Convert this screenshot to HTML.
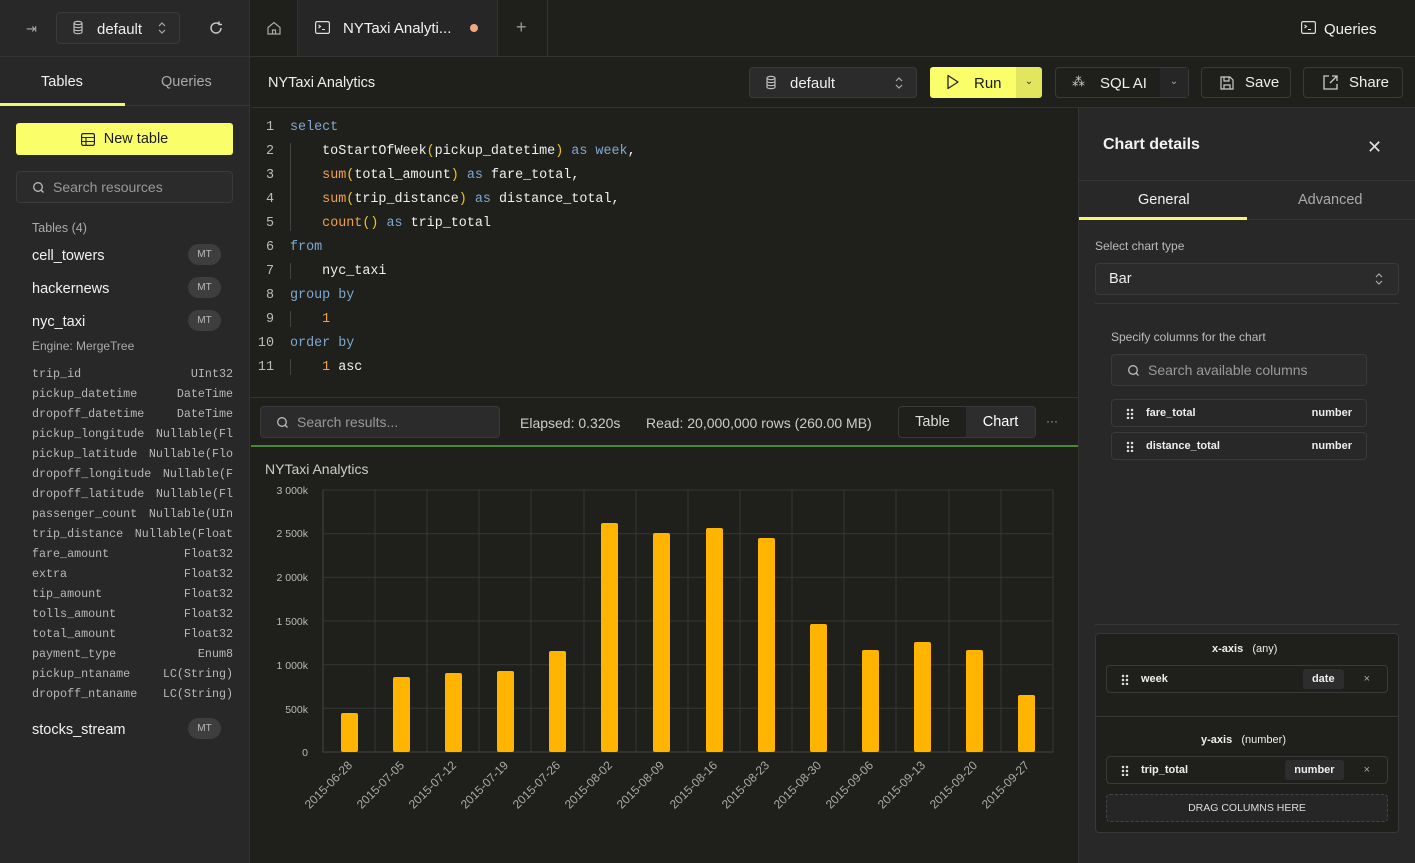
<!DOCTYPE html>
<html><head><meta charset="utf-8"><style>
*{box-sizing:border-box;margin:0;padding:0}
body{width:1415px;height:863px;overflow:hidden;background:#1f1f1b;font-family:"Liberation Sans",sans-serif;color:#e6e6e6;position:relative;font-size:14px}
.a{position:absolute}
.mono{font-family:"Liberation Mono",monospace}
.btn{position:absolute;border:1px solid #3a3a3a;border-radius:4px;display:flex;align-items:center}
svg{display:block}
.row{position:absolute;left:32px;width:201px;display:flex;justify-content:space-between;gap:5px;font-family:"Liberation Mono",monospace;font-size:11.7px;color:#b8b8b8;white-space:nowrap;overflow:hidden}
.row span:last-child{overflow:hidden;text-align:right}
.tb{position:absolute;left:32px;font-size:14.5px;color:#f2f2f2}
.mt{position:absolute;left:188px;width:33px;height:21px;border-radius:11px;background:#3e3e3e;color:#bbb;font-size:10px;display:flex;align-items:center;justify-content:center}
.ln{position:absolute;left:258px;width:16px;text-align:right;color:#bbb}
.code{position:absolute;left:290px;white-space:pre;color:#f0f0f0}
.k{color:#7fa8d0}.f{color:#f0a050}.p{color:#f5c518}.n{color:#f0a050}
.col{position:absolute;left:1111px;width:256px;height:28px;border:1px solid #3a3a3a;border-radius:4px;font-size:11px;font-weight:bold;display:flex;align-items:center;color:#eee}
.dots{width:8px;height:11px;margin:0 12px 0 14px;background-image:radial-gradient(circle,#ddd 1.2px,transparent 1.4px);background-size:4px 4px}
</style></head><body>

<div class="a" style="left:0;top:0;width:250px;height:57px;background:#282828;border-right:1px solid #333;border-bottom:1px solid #333"></div>
<div class="a" style="left:26px;top:21px;color:#aaa;font-size:13px">⇥</div>
<div class="btn" style="left:56px;top:12px;width:124px;height:32px;background:#2b2b2b">
  <svg width="40" height="30" viewBox="0 0 40 30"><g fill="none" stroke="#bbb" stroke-width="1.2"><ellipse cx="21" cy="10" rx="4" ry="1.6"/><path d="M17 10v9c0 1 1.8 1.6 4 1.6s4-.6 4-1.6v-9M17 13c0 1 1.8 1.6 4 1.6s4-.6 4-1.6M17 16c0 1 1.8 1.6 4 1.6s4-.6 4-1.6"/></g></svg>
  <span style="font-size:15px;color:#eee;margin-top:2px">default</span>
  <svg width="10" height="14" viewBox="0 0 10 14" style="margin-left:auto;margin-right:12px"><path d="M2 5l3-3 3 3M2 9l3 3 3-3" fill="none" stroke="#aaa" stroke-width="1.2"/></svg>
</div>
<svg class="a" style="left:208px;top:20px" width="16" height="16" viewBox="0 0 16 16"><path d="M13 8a5 5 0 1 1-2-4M11 1.5v3h3" fill="none" stroke="#ccc" stroke-width="1.4"/></svg>

<div class="a" style="left:250px;top:0;width:1165px;height:57px;border-bottom:1px solid #333;background:#1f1f1b"></div>
<div class="a" style="left:250px;top:0;width:48px;height:56px;border-right:1px solid #333"></div>
<svg class="a" style="left:266px;top:20px" width="16" height="16" viewBox="0 0 16 16"><path d="M2 7.5 8 2.5l6 5V14H2zM6.5 14v-4h3v4" fill="none" stroke="#aaa" stroke-width="1.2"/></svg>
<div class="a" style="left:298px;top:0;width:200px;height:56px;background:#262626;border-right:1px solid #333"></div>
<svg class="a" style="left:315px;top:21px" width="15" height="13" viewBox="0 0 15 13"><rect x="0.6" y="0.6" width="13.8" height="11.8" rx="1.5" fill="none" stroke="#ddd" stroke-width="1.2"/><path d="M3.5 4l2 1.5-2 1.5M7 8.5h3" fill="none" stroke="#ddd" stroke-width="1.1"/></svg>
<div class="a" style="left:343px;top:20px;font-size:15px;color:#f2f2f2">NYTaxi Analyti...</div>
<div class="a" style="left:470px;top:24px;width:8px;height:8px;border-radius:50%;background:#f4a582"></div>
<div class="a" style="left:498px;top:0;width:50px;height:56px;border-right:1px solid #333"></div>
<div class="a" style="left:516px;top:17px;color:#999;font-size:18px">+</div>
<svg class="a" style="left:1301px;top:21px" width="15" height="13" viewBox="0 0 15 13"><rect x="0.6" y="0.6" width="13.8" height="11.8" rx="1.5" fill="none" stroke="#ddd" stroke-width="1.2"/><path d="M3.5 4l2 1.5-2 1.5M7 8.5h3" fill="none" stroke="#ddd" stroke-width="1.1"/></svg>
<div class="a" style="left:1324px;top:21px;font-size:15px;color:#f2f2f2">Queries</div>

<div class="a" style="left:0;top:57px;width:250px;height:806px;background:#282828;border-right:1px solid #333"></div>
<div class="a" style="left:0;top:57px;width:250px;height:49px;border-bottom:1px solid #383838"></div>
<div class="a" style="left:41px;top:74px;font-size:14.5px;color:#f2f2f2">Tables</div>
<div class="a" style="left:161px;top:74px;font-size:14.5px;color:#aaa">Queries</div>
<div class="a" style="left:0;top:103px;width:125px;height:3px;background:#f5f76a"></div>
<div class="a" style="left:16px;top:123px;width:217px;height:32px;background:#faff69;border-radius:3px;display:flex;align-items:center;justify-content:center;color:#1a1a1a;font-size:14.5px">
<svg width="14" height="13" viewBox="0 0 14 13" style="margin-right:9px"><rect x="0.6" y="0.6" width="12.8" height="11.8" rx="1.5" fill="none" stroke="#222" stroke-width="1.2"/><path d="M0.6 4.5h12.8M0.6 8.5h12.8M5 4.5v8" stroke="#222" stroke-width="1.1"/></svg>New table</div>
<div class="btn" style="left:16px;top:171px;width:217px;height:32px;background:#2b2b2b">
<svg width="40" height="30" viewBox="0 0 40 30"><circle cx="21" cy="15" r="4.3" fill="none" stroke="#bbb" stroke-width="1.3"/><path d="M24 18l2.5 2.5" stroke="#bbb" stroke-width="1.3"/></svg>
<span style="color:#999;font-size:14px;margin-left:-4px">Search resources</span></div>
<div class="a" style="left:32px;top:221px;font-size:12.5px;color:#aaa">Tables (4)</div>
<div class="tb" style="top:248px">cell_towers</div><div class="mt" style="top:244px">MT</div>
<div class="tb" style="top:281px">hackernews</div><div class="mt" style="top:277px">MT</div>
<div class="tb" style="top:314px">nyc_taxi</div><div class="mt" style="top:310px">MT</div>
<div class="a" style="left:32px;top:339px;font-size:12px;color:#aaa">Engine: MergeTree</div>
<div class="row" style="top:367px"><span>trip_id</span><span>UInt32</span></div>
<div class="row" style="top:387px"><span>pickup_datetime</span><span>DateTime</span></div>
<div class="row" style="top:407px"><span>dropoff_datetime</span><span>DateTime</span></div>
<div class="row" style="top:427px"><span>pickup_longitude</span><span>Nullable(Fl</span></div>
<div class="row" style="top:447px"><span>pickup_latitude</span><span>Nullable(Flo</span></div>
<div class="row" style="top:467px"><span>dropoff_longitude</span><span>Nullable(F</span></div>
<div class="row" style="top:487px"><span>dropoff_latitude</span><span>Nullable(Fl</span></div>
<div class="row" style="top:507px"><span>passenger_count</span><span>Nullable(UIn</span></div>
<div class="row" style="top:527px"><span>trip_distance</span><span>Nullable(Float</span></div>
<div class="row" style="top:547px"><span>fare_amount</span><span>Float32</span></div>
<div class="row" style="top:567px"><span>extra</span><span>Float32</span></div>
<div class="row" style="top:587px"><span>tip_amount</span><span>Float32</span></div>
<div class="row" style="top:607px"><span>tolls_amount</span><span>Float32</span></div>
<div class="row" style="top:627px"><span>total_amount</span><span>Float32</span></div>
<div class="row" style="top:647px"><span>payment_type</span><span>Enum8</span></div>
<div class="row" style="top:667px"><span>pickup_ntaname</span><span>LC(String)</span></div>
<div class="row" style="top:687px"><span>dropoff_ntaname</span><span>LC(String)</span></div>
<div class="tb" style="top:722px">stocks_stream</div><div class="mt" style="top:718px">MT</div>

<div class="a" style="left:251px;top:57px;width:1164px;height:51px;border-bottom:1px solid #333"></div>
<div class="a" style="left:268px;top:75px;font-size:14.5px;color:#eee">NYTaxi Analytics</div>
<div class="btn" style="left:749px;top:67px;width:168px;height:31px;background:#2b2b2b">
<svg width="40" height="30" viewBox="0 0 40 30"><g fill="none" stroke="#bbb" stroke-width="1.2"><ellipse cx="21" cy="10" rx="4" ry="1.6"/><path d="M17 10v9c0 1 1.8 1.6 4 1.6s4-.6 4-1.6v-9M17 13c0 1 1.8 1.6 4 1.6s4-.6 4-1.6M17 16c0 1 1.8 1.6 4 1.6s4-.6 4-1.6"/></g></svg>
<span style="font-size:15px;color:#eee;margin-top:2px">default</span><svg width="10" height="14" viewBox="0 0 10 14" style="margin-left:auto;margin-right:12px"><path d="M2 5l3-3 3 3M2 9l3 3 3-3" fill="none" stroke="#aaa" stroke-width="1.2"/></svg></div>
<div class="a" style="left:930px;top:67px;width:87px;height:31px;background:#faff69;border-radius:3px 0 0 3px"></div>
<div class="a" style="left:1016px;top:67px;width:26px;height:31px;background:#e2e55e;border-radius:0 3px 3px 0;color:#333;font-size:10px;text-align:center;line-height:29px">⌄</div>
<svg class="a" style="left:946px;top:74px" width="14" height="16" viewBox="0 0 14 16"><path d="M2 1.5v13l10-6.5z" fill="none" stroke="#222" stroke-width="1.3" stroke-linejoin="round"/></svg>
<div class="a" style="left:974px;top:75px;font-size:15px;color:#1a1a1a">Run</div>
<div class="btn" style="left:1055px;top:67px;width:134px;height:31px"></div>
<div class="a" style="left:1160px;top:68px;width:28px;height:29px;background:#262626;color:#aaa;font-size:10px;text-align:center;line-height:27px">⌄</div>
<div class="a" style="left:1072px;top:74px;color:#ccc;font-size:13px">⁂</div>
<div class="a" style="left:1100px;top:75px;font-size:15px;color:#eee">SQL AI</div>
<div class="btn" style="left:1201px;top:67px;width:90px;height:31px"><svg width="16" height="16" viewBox="0 0 16 16" style="margin:0 10px 0 17px"><path d="M2 2h9l3 3v9H2zM5 2v4h5V2M5 14v-4h6v4" fill="none" stroke="#ccc" stroke-width="1.2"/></svg><span style="font-size:15px;color:#eee">Save</span></div>
<div class="btn" style="left:1303px;top:67px;width:100px;height:31px"><svg width="17" height="17" viewBox="0 0 17 17" style="margin:0 10px 0 18px"><path d="M7 2H2v13h13v-5M10 2h5v5M15 2 8 9" fill="none" stroke="#ccc" stroke-width="1.3"/></svg><span style="font-size:15px;color:#eee">Share</span></div>

<div class="mono" style="font-size:13.4px">
<div class="a" style="left:290px;top:143px;width:1px;height:88px;background:#444"></div>
<div class="a" style="left:290px;top:263px;width:1px;height:16px;background:#444"></div>
<div class="a" style="left:290px;top:311px;width:1px;height:16px;background:#444"></div>
<div class="a" style="left:290px;top:359px;width:1px;height:16px;background:#444"></div>
<div class="ln" style="top:120px">1</div><div class="code" style="top:120px"><span class="k">select</span></div>
<div class="ln" style="top:144px">2</div><div class="code" style="top:144px">    toStartOfWeek<span class="p">(</span>pickup_datetime<span class="p">)</span> <span class="k">as</span> <span class="k">week</span>,</div>
<div class="ln" style="top:168px">3</div><div class="code" style="top:168px">    <span class="f">sum</span><span class="p">(</span>total_amount<span class="p">)</span> <span class="k">as</span> fare_total,</div>
<div class="ln" style="top:192px">4</div><div class="code" style="top:192px">    <span class="f">sum</span><span class="p">(</span>trip_distance<span class="p">)</span> <span class="k">as</span> distance_total,</div>
<div class="ln" style="top:216px">5</div><div class="code" style="top:216px">    <span class="f">count</span><span class="p">()</span> <span class="k">as</span> trip_total</div>
<div class="ln" style="top:240px">6</div><div class="code" style="top:240px"><span class="k">from</span></div>
<div class="ln" style="top:264px">7</div><div class="code" style="top:264px">    nyc_taxi</div>
<div class="ln" style="top:288px">8</div><div class="code" style="top:288px"><span class="k">group by</span></div>
<div class="ln" style="top:312px">9</div><div class="code" style="top:312px">    <span class="n">1</span></div>
<div class="ln" style="top:336px;left:256px;width:18px">10</div><div class="code" style="top:336px"><span class="k">order by</span></div>
<div class="ln" style="top:360px;left:256px;width:18px">11</div><div class="code" style="top:360px">    <span class="n">1</span> asc</div>
</div>

<div class="a" style="left:251px;top:397px;width:828px;height:1px;background:#333"></div>
<div class="btn" style="left:260px;top:406px;width:240px;height:32px;background:#2b2b2b"><svg width="36" height="30" viewBox="0 0 36 30"><circle cx="21" cy="15" r="4.3" fill="none" stroke="#bbb" stroke-width="1.3"/><path d="M24 18l2.5 2.5" stroke="#bbb" stroke-width="1.3"/></svg><span style="color:#999;font-size:14px">Search results...</span></div>
<div class="a" style="left:520px;top:415px;font-size:14px;color:#ccc">Elapsed: 0.320s</div>
<div class="a" style="left:646px;top:415px;font-size:14px;color:#ccc">Read: 20,000,000 rows (260.00 MB)</div>
<div class="btn" style="left:898px;top:406px;width:138px;height:32px;overflow:hidden"><span style="width:68px;text-align:center;font-size:14.5px;color:#ddd">Table</span><span style="width:70px;height:100%;background:#2d2d2d;text-align:center;line-height:30px;font-size:14.5px;color:#fff">Chart</span></div>
<div class="a" style="left:1046px;top:414px;color:#aaa;font-size:12px">···</div>
<div class="a" style="left:251px;top:445px;width:828px;height:2px;background:#4b8a2b"></div>

<div class="a" style="left:265px;top:461px;font-size:14px;color:#ccc">NYTaxi Analytics</div>
<svg class="a" style="left:251px;top:470px" width="828" height="393" viewBox="251 470 828 393" font-family="Liberation Sans" font-size="10.5" fill="#bbb">
<g stroke="#363636" stroke-width="1">
<path d="M323 490H1053M323 533.7H1053M323 577.3H1053M323 621H1053M323 664.7H1053M323 708.3H1053"/>
<path d="M375 490V752M427 490V752M479 490V752M531 490V752M584 490V752M636 490V752M688 490V752M740 490V752M792 490V752M844 490V752M896 490V752M949 490V752M1001 490V752M1053 490V752"/>
</g>
<path d="M323 490V752H1053" stroke="#444" fill="none"/>
<g text-anchor="end"><text x="308" y="494">3 000k</text><text x="308" y="537">2 500k</text><text x="308" y="581">2 000k</text><text x="308" y="625">1 500k</text><text x="308" y="669">1 000k</text><text x="308" y="713">500k</text><text x="308" y="756">0</text></g>
<g fill="#ffb400">
<rect x="341" y="713" width="17" height="39" rx="2"/><rect x="393" y="677" width="17" height="75" rx="2"/><rect x="445" y="673" width="17" height="79" rx="2"/><rect x="497" y="671" width="17" height="81" rx="2"/><rect x="549" y="651" width="17" height="101" rx="2"/><rect x="601" y="523" width="17" height="229" rx="2"/><rect x="653" y="533" width="17" height="219" rx="2"/><rect x="706" y="528" width="17" height="224" rx="2"/><rect x="758" y="538" width="17" height="214" rx="2"/><rect x="810" y="624" width="17" height="128" rx="2"/><rect x="862" y="650" width="17" height="102" rx="2"/><rect x="914" y="642" width="17" height="110" rx="2"/><rect x="966" y="650" width="17" height="102" rx="2"/><rect x="1018" y="695" width="17" height="57" rx="2"/>
</g>
<g text-anchor="end" font-size="12" fill="#aaa">
<text transform="translate(353,766) rotate(-45)">2015-06-28</text><text transform="translate(405,766) rotate(-45)">2015-07-05</text><text transform="translate(457,766) rotate(-45)">2015-07-12</text><text transform="translate(509,766) rotate(-45)">2015-07-19</text><text transform="translate(561,766) rotate(-45)">2015-07-26</text><text transform="translate(613,766) rotate(-45)">2015-08-02</text><text transform="translate(665,766) rotate(-45)">2015-08-09</text><text transform="translate(718,766) rotate(-45)">2015-08-16</text><text transform="translate(770,766) rotate(-45)">2015-08-23</text><text transform="translate(822,766) rotate(-45)">2015-08-30</text><text transform="translate(874,766) rotate(-45)">2015-09-06</text><text transform="translate(926,766) rotate(-45)">2015-09-13</text><text transform="translate(978,766) rotate(-45)">2015-09-20</text><text transform="translate(1030,766) rotate(-45)">2015-09-27</text>
</g>
</svg>

<div class="a" style="left:1078px;top:108px;width:337px;height:755px;background:#282828;border-left:1px solid #333"></div>
<div class="a" style="left:1103px;top:136px;font-size:16px;font-weight:bold;color:#f2f2f2">Chart details</div>
<div class="a" style="left:1367px;top:137px;font-size:18px;color:#ddd">✕</div>
<div class="a" style="left:1079px;top:180px;width:336px;height:1px;background:#383838"></div>
<div class="a" style="left:1079px;top:219px;width:336px;height:1px;background:#383838"></div>
<div class="a" style="left:1138px;top:192px;font-size:14.5px;color:#f2f2f2">General</div>
<div class="a" style="left:1298px;top:192px;font-size:14.5px;color:#aaa">Advanced</div>
<div class="a" style="left:1079px;top:217px;width:168px;height:3px;background:#f5f76a"></div>
<div class="a" style="left:1095px;top:239px;font-size:12px;color:#bbb">Select chart type</div>
<div class="btn" style="left:1095px;top:263px;width:304px;height:32px;background:#2b2b2b"><span style="margin-left:13px;font-size:14.5px;color:#eee">Bar</span><svg width="10" height="14" viewBox="0 0 10 14" style="margin-left:auto;margin-right:14px"><path d="M2 5l3-3 3 3M2 9l3 3 3-3" fill="none" stroke="#aaa" stroke-width="1.2"/></svg></div>
<div class="a" style="left:1095px;top:303px;width:304px;height:1px;background:#383838"></div>
<div class="a" style="left:1111px;top:330px;font-size:12px;color:#bbb">Specify columns for the chart</div>
<div class="btn" style="left:1111px;top:354px;width:256px;height:32px;background:#2b2b2b"><svg width="36" height="30" viewBox="0 0 36 30"><circle cx="21" cy="15" r="4.3" fill="none" stroke="#bbb" stroke-width="1.3"/><path d="M24 18l2.5 2.5" stroke="#bbb" stroke-width="1.3"/></svg><span style="color:#999;font-size:14px">Search available columns</span></div>
<div class="col" style="top:399px"><div class="dots"></div>fare_total<span style="margin-left:auto;margin-right:14px">number</span></div>
<div class="col" style="top:432px"><div class="dots"></div>distance_total<span style="margin-left:auto;margin-right:14px">number</span></div>
<div class="a" style="left:1095px;top:624px;width:304px;height:1px;background:#383838"></div>
<div class="a" style="left:1095px;top:633px;width:304px;height:200px;background:#1f1f1b;border:1px solid #383838;border-radius:4px"></div>
<div class="a" style="left:1096px;top:716px;width:302px;height:1px;background:#383838"></div>
<div class="a" style="left:1212px;top:643px;font-size:11px;color:#eee"><b>x-axis</b> &nbsp; (any)</div>
<div class="col" style="left:1106px;top:665px;width:282px"><div class="dots" style="margin-left:14px"></div>week<span style="margin-left:auto;background:#2d2d2d;padding:4px 9px;border-radius:3px">date</span><span style="margin:0 17px 0 20px;color:#aaa;font-weight:normal">×</span></div>
<div class="a" style="left:1201px;top:734px;font-size:11px;color:#eee"><b>y-axis</b> &nbsp; (number)</div>
<div class="col" style="left:1106px;top:756px;width:282px"><div class="dots" style="margin-left:14px"></div>trip_total<span style="margin-left:auto;background:#2d2d2d;padding:4px 9px;border-radius:3px">number</span><span style="margin:0 17px 0 20px;color:#aaa;font-weight:normal">×</span></div>
<div class="a" style="left:1106px;top:794px;width:282px;height:28px;border:1px dashed #444;border-radius:4px;background:#262626;font-size:10.5px;color:#ddd;text-align:center;line-height:26px">DRAG COLUMNS HERE</div>
</body></html>
